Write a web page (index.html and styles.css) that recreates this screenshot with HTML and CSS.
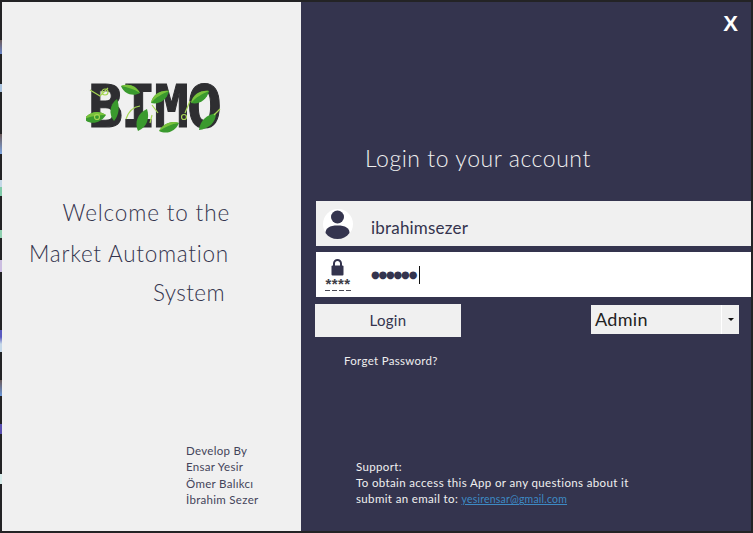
FILE: index.html
```html
<!DOCTYPE html>
<html lang="en">
<head>
  <meta charset="UTF-8">
  <title>BIMO Login</title>
  <link rel="stylesheet" href="styles.css">
</head>
<body>
  <div class="window">
    <div class="side">
      <div class="logo">
        <span class="logo-text">BIMO</span>
        <svg class="logo-leaves" viewBox="0 0 136 52" width="136" height="52">
          <g fill="#3a9a2e">
            <path d="M-2 38c6-8 15-9 22-4-6 9-16 10-22 4z"/>
            <path d="M35 5c7-3 15-1 19 7-7 4-16 1-19-7z"/>
            <path d="M28 40c-6-7-4-17 3-22 3 8 2 16-3 22z"/>
            <path d="M52 50c-4-9 0-18 9-22 3 9 0 18-9 22z"/>
            <path d="M65 22c2-9 10-13 18-12-2 9-10 14-18 12z"/>
            <path d="M73 50c4-7 12-11 20-8-3 8-12 12-20 8z"/>
            <path d="M105 22c2-9 10-13 18-12-2 9-10 14-18 12z"/>
            <path d="M113 49c1-10 8-15 17-17 0 10-8 16-17 17z"/>
          </g>
          <g fill="#79c23c">
            <path d="M-2 38c6-8 15-9 22-4-7 0-15 1-22 4z"/>
            <path d="M35 5c7-3 15-1 19 7-6-4-13-6-19-7z"/>
            <path d="M65 22c2-9 10-13 18-12-7 3-13 6-18 12z"/>
            <path d="M105 22c2-9 10-13 18-12-7 3-13 6-18 12z"/>
            <path d="M73 50c4-7 12-11 20-8-8 1-14 4-20 8z"/>
          </g>
          <g fill="none" stroke="#a6d653" stroke-width="1.200">
            <path d="M4 9l10 6 8-8"/>
            <circle cx="19" cy="11" r="3"/>
            <path d="M40 38c2-6 6-12 14-13"/>
            <circle cx="11" cy="36" r="2.500"/>
            <path d="M66 24l6 8M66 34l-2 8"/>
            <circle cx="98" cy="36" r="2.500"/>
            <path d="M104 20l-5 12M128 34l6-6"/>
          </g>
        </svg>
      </div>
      <div class="welcome">
        <p class="welcome-a">Welcome to the</p>
        <p class="welcome-b">Market Automation</p>
        <p class="welcome-c">System</p>
      </div>
      <div class="credits">
        <p>Develop By</p>
        <p>Ensar Yesir</p>
        <p>Ömer Balıkcı</p>
        <p>İbrahim Sezer</p>
      </div>
    </div>

    <div class="main">
      <div class="close">X</div>
      <h1>Login to your account</h1>

      <div class="field field-user">
        <svg class="field-icon" viewBox="0 0 30 36" width="30" height="36">
          <circle cx="15" cy="18" r="15" fill="#fff"/>
          <circle cx="14.500" cy="11" r="6.500" fill="#34344e"/>
          <path d="M2.500 27c0-5 4-7.500 12-7.500s12 2.500 12 7.500c-3 4-7 6-12 6s-9-2-12-6z" fill="#34344e"/>
        </svg>
        <span class="field-text">ibrahimsezer</span>
      </div>

      <div class="field field-pass">
        <svg class="field-icon" viewBox="0 0 30 36" width="30" height="36">
          <path d="M11 9V6.500a3.500 3.500 0 0 1 7 0V9" fill="none" stroke="#34344e" stroke-width="2"/>
          <rect x="8.500" y="8.500" width="12" height="10" rx="1" fill="#34344e"/>
          <text class="lock-stars" x="15" y="32" text-anchor="middle">****</text>
          <path d="M2 33.500h5M9 33.500h5M16 33.500h5M23 33.500h5" stroke="#4a4a55" stroke-width="1"/>
        </svg>
        <span class="field-text pass-dots">●●●●●●</span>
      </div>

      <div class="actions">
        <button class="login">Login</button>
        <div class="role">
          <span class="role-text">Admin</span>
          <span class="role-arrow"></span>
        </div>
      </div>

      <a class="forget">Forget Password?</a>

      <div class="support">
        <p>Support:</p>
        <p>To obtain access this App or any questions about it</p>
        <p>submit an email to: <a class="mail">yesirensar@gmail.com</a></p>
      </div>
    </div>
  </div>
</body>
</html>
```

FILE: styles.css
```css
* {
  box-sizing: border-box;
}

html, body {
  margin: 0;
  height: 100%;
}

body {
  font-family: 'Lato', 'Open Sans', sans-serif;
  background-color: #232325;
  overflow: hidden;
}

p {
  margin: 0;
}

.window {
  width: 753px;
  height: 533px;
  padding: 2px;
  display: flex;
  background-image: linear-gradient(to bottom,
    #232325 40px, #6b5a5a 40px, #6a86c8 54px, #232325 54px,
    #232325 84px, #a9c3de 84px, #a9c3de 92px, #232325 92px,
    #232325 134px, #6b5a5a 134px, #7fa6e0 154px, #232325 154px,
    #232325 180px, #c5d8e8 180px, #c5d8e8 187px, #7fc9a8 187px, #7fc9a8 196px, #232325 196px,
    #232325 230px, #8fd0b0 230px, #8fd0b0 238px, #232325 238px,
    #232325 260px, #cbbde0 260px, #cbbde0 272px, #232325 272px,
    #232325 330px, #5a5ac0 330px, #5a5ac0 337px, #c5d8e8 344px, #c5d8e8 352px, #232325 352px,
    #232325 380px, #6b5a5a 380px, #6a96d8 396px, #232325 396px,
    #232325 424px, #5a50b0 424px, #5a50b0 434px, #232325 434px,
    #232325 474px, #d8ecea 474px, #d8ecea 484px, #232325 484px);
  background-size: 2px 100%;
  background-repeat: no-repeat;
}

.side {
  width: 299px;
  background-color: #f0f0f0;
  color: #34344e;
  display: flex;
  flex-direction: column;
}

.logo {
  position: relative;
  width: 136px;
  height: 52px;
  margin: 79px 0 0 84px;
  text-align: center;
}

.logo-text {
  font-family: 'DejaVu Sans Mono', monospace;
  font-weight: bold;
  font-size: 58px;
  line-height: 52px;
  letter-spacing: -2px;
  color: #2e2e31;
  -webkit-text-stroke: 1px #2e2e31;
}

.logo-leaves {
  position: absolute;
  left: 0;
  top: 0;
}

.welcome {
  margin-top: 65px;
  font-size: 22.500px;
  font-weight: 300;
  text-align: right;
}

.welcome p {
  line-height: 30px;
}

.welcome-a {
  height: 41px;
  padding-right: 71px;
  letter-spacing: 0.850px;
}

.welcome-b {
  height: 39px;
  padding-right: 72px;
  letter-spacing: 0.750px;
}

.welcome-c {
  height: 40px;
  padding-right: 76px;
  letter-spacing: 0.400px;
}

.credits {
  margin: 125px 0 0 184px;
  font-size: 11.500px;
  line-height: 16.300px;
  letter-spacing: 0.3px;
  color: #44445a;
}

.main {
  position: relative;
  flex: 1;
  background-color: #34344e;
  color: #f0f0f0;
  padding-top: 141px;
  display: flex;
  flex-direction: column;
}

.close {
  position: absolute;
  top: 9px;
  right: 13px;
  font-family: 'Liberation Sans', sans-serif;
  font-weight: bold;
  font-size: 22px;
  color: #fff;
}

h1 {
  margin: 0 0 28px 64px;
  font-size: 23px;
  font-weight: 300;
  line-height: 30px;
  letter-spacing: 0.550px;
}

.field {
  height: 45px;
  margin: 0 0 6px 15px;
  display: flex;
  align-items: center;
  padding-left: 7px;
  color: #34344e;
}

.field-user {
  background-color: #f0f0f0;
}

.field-pass {
  background-color: #fff;
}

.field-icon {
  flex: none;
}

.lock-stars {
  font-family: 'Liberation Sans', sans-serif;
  font-weight: bold;
  font-size: 15px;
  letter-spacing: 0.4px;
  fill: #3e3e48;
}

.field-text {
  margin: 8px 0 0 18px;
  font-size: 17px;
  letter-spacing: 0.200px;
}

.pass-dots {
  margin-top: 0;
  font-family: 'DejaVu Sans', sans-serif;
  font-size: 10px;
  letter-spacing: -1.200px;
  line-height: 18px;
  padding-right: 3px;
  border-right: 1px solid #111;
}

.actions {
  margin: 1px 12px 0 14px;
  display: flex;
  justify-content: space-between;
  align-items: flex-start;
}

.login {
  width: 146px;
  height: 33px;
  padding: 0 0 2px;
  border: none;
  background-color: #f0f0f0;
  color: #34344e;
  font-family: inherit;
  font-size: 15px;
  letter-spacing: 0.3px;
}

.role {
  width: 148px;
  height: 29px;
  margin-top: 1px;
  background-color: #f0f0f0;
  display: flex;
  align-items: center;
  justify-content: space-between;
  color: #222;
}

.role-text {
  padding: 0 0 2px 4px;
  font-size: 18px;
  letter-spacing: 0.3px;
}

.role-arrow {
  width: 18px;
  height: 100%;
  border-left: 1px solid #fff;
  position: relative;
}

.role-arrow::after {
  content: "";
  position: absolute;
  left: 6px;
  top: 13px;
  border: 3px solid transparent;
  border-top: 3px solid #111;
  border-bottom: none;
}

.forget {
  margin: 16px 0 0 43px;
  font-size: 11.500px;
  line-height: 16px;
  letter-spacing: 0.3px;
  color: #eeeeee;
}

.support {
  margin: 90px 0 0 55px;
  font-size: 11.500px;
  line-height: 16px;
  letter-spacing: 0.360px;
}

.mail {
  font-size: 10.500px;
  letter-spacing: 0.200px;
  color: #3d8ac4;
  text-decoration: underline;
}
```
